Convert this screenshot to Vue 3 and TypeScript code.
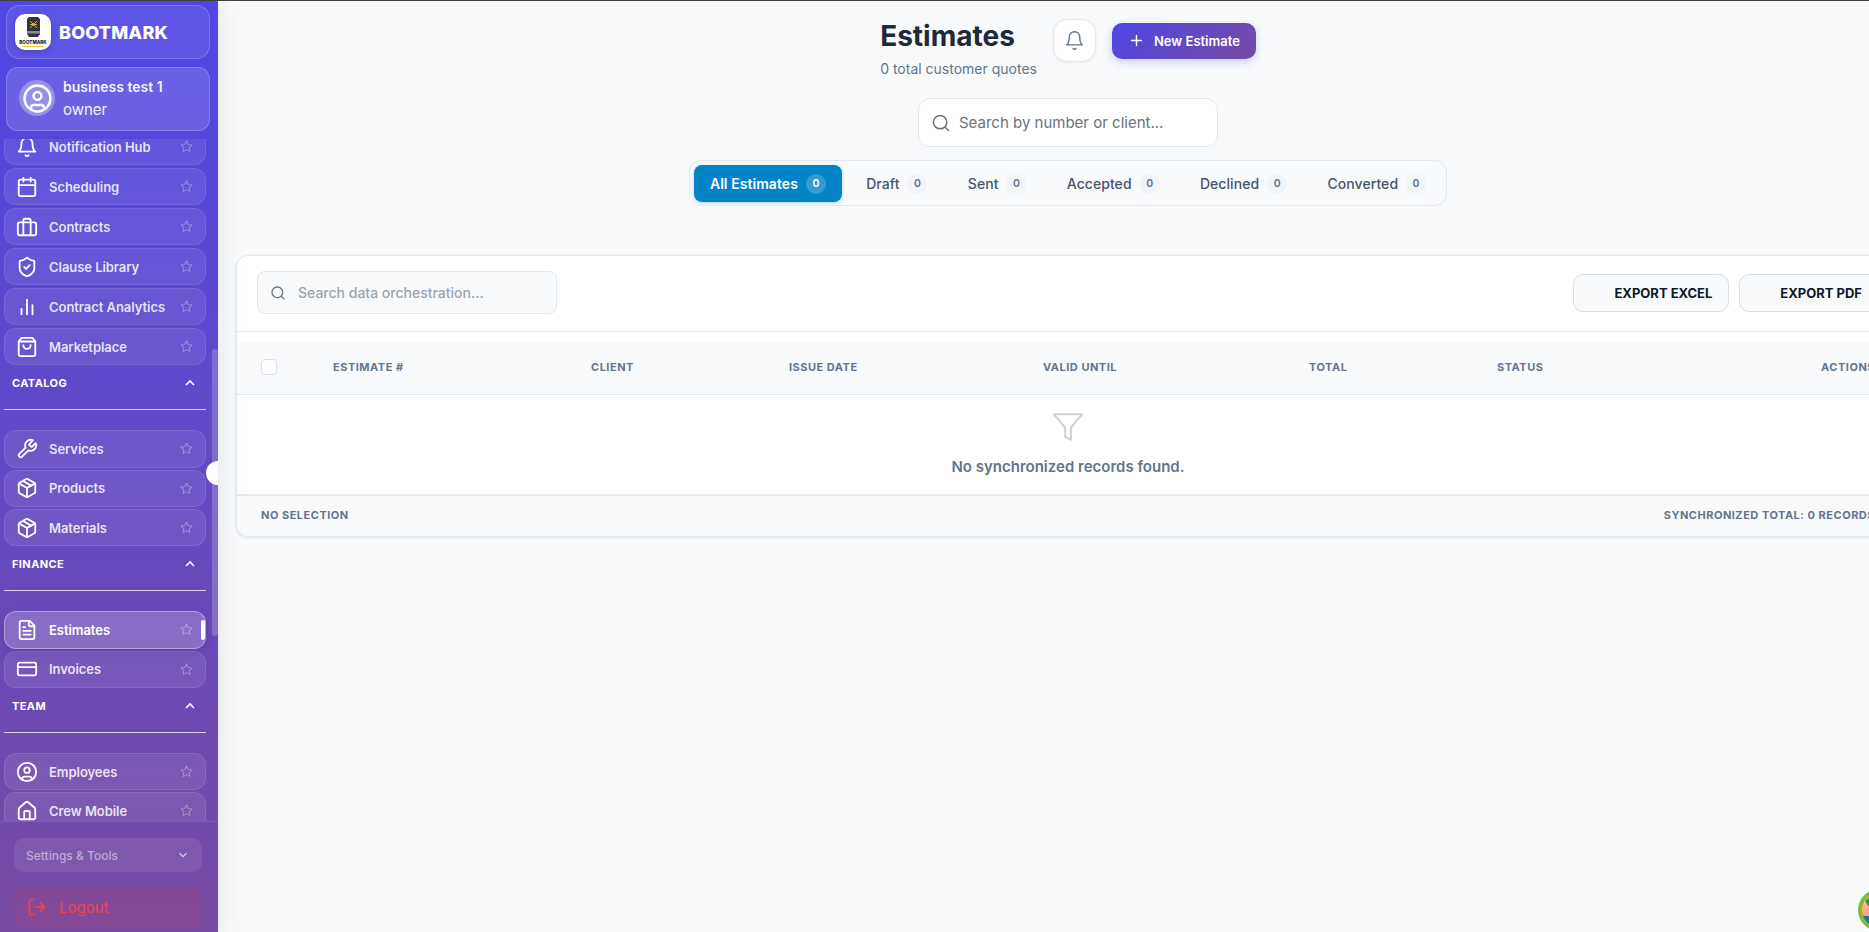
<template>
  <div class="topline"></div>
  <div class="layout">
    <!-- Sidebar -->
    <aside class="sidebar">
      <div class="brand">
        <div class="brand-logo">
          <svg viewBox="0 0 36 36" width="36" height="36">
            <path d="M12 5l2-2h9l2 2v15l-2 3h-9l-2-3z" fill="#34343a" />
            <path d="M15 7l7 7M22 7l-7 7M15 10.5h7" stroke="#e9c21f" stroke-width="0.9" />
            <circle cx="18.5" cy="10.5" r="1.3" fill="#e9c21f" />
            <path d="M12 17h13v2.5H12z" fill="#8a8a8f" />
            <text x="18" y="30" text-anchor="middle" class="brand-logo-text">BOOTMARK</text>
            <path d="M7 32.5h22" stroke="#f2c81e" stroke-width="0.9" />
          </svg>
        </div>
        <span class="brand-name">BOOTMARK</span>
      </div>

      <div class="user-card">
        <div class="avatar">
          <svg viewBox="0 0 24 24" class="avatar-icon">
            <path v-for="d in icons.user" :key="d" :d="d" />
          </svg>
        </div>
        <div class="user-text">
          <div class="user-name">business test 1</div>
          <div class="user-role">owner</div>
        </div>
      </div>

      <div class="menu-wrap">
        <nav class="menu">
          <div v-for="group in groups" :key="group.title" class="group">
            <div v-if="group.title" class="group-head">
              <div class="group-label">
                <span>{{ group.title }}</span>
                <svg viewBox="0 0 24 24" class="chev">
                  <path d="m18 15-6-6-6 6" />
                </svg>
              </div>
            </div>
            <div class="items" :class="{ wide: !group.title }">
              <a
                v-for="item in group.items"
                :key="item.label"
                class="item"
                :class="{ active: item.active }"
              >
                <svg viewBox="0 0 24 24" class="item-icon">
                  <path v-for="d in icons[item.icon]" :key="d" :d="d" />
                </svg>
                <span class="item-label">{{ item.label }}</span>
                <svg viewBox="0 0 24 24" class="star">
                  <path d="M12 2l3.09 6.26L22 9.27l-5 4.87 1.18 6.88L12 17.77l-6.18 3.25L7 14.14 2 9.27l6.91-1.01z" />
                </svg>
                <span v-if="item.active" class="active-bar"></span>
              </a>
            </div>
          </div>
        </nav>
        <div class="scroll-thumb"></div>
        <div class="collapse-dot"></div>
      </div>

      <div class="side-bottom">
        <div class="settings">
          <span>Settings &amp; Tools</span>
          <svg viewBox="0 0 24 24" class="settings-chev"><path d="m6 9 6 6 6-6" /></svg>
        </div>
        <div class="logout">
          <svg viewBox="0 0 24 24" class="logout-icon">
            <path d="M9 21H5a2 2 0 0 1-2-2V5a2 2 0 0 1 2-2h4" />
            <path d="m16 17 5-5-5-5" />
            <path d="M21 12H9" />
          </svg>
          <span>Logout</span>
        </div>
      </div>
    </aside>

    <!-- Main -->
    <main class="main">
      <div class="page">
        <header class="page-head">
          <div class="title-block">
            <h1>Estimates</h1>
            <p>0 total customer quotes</p>
          </div>
          <div class="head-actions">
            <button class="bell-btn">
              <svg viewBox="0 0 24 24" class="bell-icon">
                <path v-for="d in icons.bell" :key="d" :d="d" />
              </svg>
            </button>
            <button class="new-btn">
              <svg viewBox="0 0 24 24" class="plus-icon"><path d="M5 12h14M12 5v14" /></svg>
              New Estimate
            </button>
          </div>
        </header>

        <div class="search">
          <svg viewBox="0 0 24 24" class="search-icon">
            <path d="M19 11a8 8 0 1 1-16 0a8 8 0 1 1 16 0M21 21l-4.3-4.3" />
          </svg>
          <span>Search by number or client...</span>
        </div>

        <div class="tabs">
          <div v-for="(tab, i) in tabs" :key="tab" class="tab" :class="{ current: i === 0 }">
            <span>{{ tab }}</span>
            <span class="count">0</span>
          </div>
        </div>

        <section class="card">
          <div class="toolbar">
            <div class="table-search">
              <svg viewBox="0 0 24 24" class="table-search-icon">
                <path d="M19 11a8 8 0 1 1-16 0a8 8 0 1 1 16 0M21 21l-4.3-4.3" />
              </svg>
              <span>Search data orchestration...</span>
            </div>
            <div class="exports">
              <button class="export">EXPORT EXCEL</button>
              <button class="export">EXPORT PDF</button>
            </div>
          </div>

          <div class="table-head">
            <span class="check"></span>
            <span v-for="col in columns" :key="col">{{ col }}</span>
            <span class="actions-col">ACTIONS</span>
          </div>

          <div class="empty">
            <svg viewBox="0 0 24 24" class="funnel">
              <path d="M22 3H2l8 9.46V19l4 2v-8.54z" />
            </svg>
            <p>No synchronized records found.</p>
          </div>

          <div class="table-foot">
            <span>NO SELECTION</span>
            <span>SYNCHRONIZED TOTAL: 0 RECORDS</span>
          </div>
        </section>
      </div>
    </main>

    <!-- Floating widget in the corner -->
    <div class="widget">
      <svg viewBox="0 0 42 42" width="42" height="42">
        <defs>
          <linearGradient id="sunset" x1="0" y1="0" x2="0" y2="1">
            <stop offset="0" stop-color="#ffe08a" />
            <stop offset="0.65" stop-color="#ff9a7a" />
            <stop offset="0.66" stop-color="#12799a" />
            <stop offset="1" stop-color="#12799a" />
          </linearGradient>
        </defs>
        <circle cx="21" cy="21" r="19" fill="url(#sunset)" stroke="#86b83c" stroke-width="4" />
        <path d="M7 12l4-4 3 5-4 4z" fill="#2f9a3a" />
      </svg>
    </div>
  </div>
</template>

<script setup lang="ts">
interface NavItem {
  label: string
  icon: string
  active?: boolean
}

interface NavGroup {
  title: string
  items: NavItem[]
}

const icons: Record<string, string[]> = {
  bell: ['M6 8a6 6 0 0 1 12 0c0 7 3 9 3 9H3s3-2 3-9', 'M10.3 21a1.94 1.94 0 0 0 3.4 0'],
  calendar: ['M8 2v4', 'M16 2v4', 'M5 4h14a2 2 0 0 1 2 2v14a2 2 0 0 1-2 2H5a2 2 0 0 1-2-2V6a2 2 0 0 1 2-2z', 'M3 10h18'],
  briefcase: ['M4 7h16a2 2 0 0 1 2 2v10a2 2 0 0 1-2 2H4a2 2 0 0 1-2-2V9a2 2 0 0 1 2-2z', 'M16 21V5a2 2 0 0 0-2-2h-4a2 2 0 0 0-2 2v16'],
  shield: [
    'M20 13c0 5-3.5 7.5-7.66 8.95a1 1 0 0 1-.67-.01C7.5 20.5 4 18 4 13V6a1 1 0 0 1 1-1c2 0 4.5-1.2 6.24-2.72a1.17 1.17 0 0 1 1.52 0C14.51 3.81 17 5 19 5a1 1 0 0 1 1 1z',
    'm9 12 2 2 4-4',
  ],
  chart: ['M18 20V10', 'M12 20V4', 'M6 20v-6'],
  bag: ['M6 2 3 6v14a2 2 0 0 0 2 2h14a2 2 0 0 0 2-2V6l-3-4Z', 'M3 6h18', 'M16 10a4 4 0 0 1-8 0'],
  wrench: ['M14.7 6.3a1 1 0 0 0 0 1.4l1.6 1.6a1 1 0 0 0 1.4 0l3.77-3.77a6 6 0 0 1-7.94 7.94l-6.91 6.91a2.12 2.12 0 0 1-3-3l6.91-6.91a6 6 0 0 1 7.94-7.94l-3.76 3.76z'],
  box: [
    'M16.5 9.4 7.55 4.24',
    'M21 16V8a2 2 0 0 0-1-1.73l-7-4a2 2 0 0 0-2 0l-7 4A2 2 0 0 0 3 8v8a2 2 0 0 0 1 1.73l7 4a2 2 0 0 0 2 0l7-4A2 2 0 0 0 21 16z',
    'M3.29 7 12 12l8.71-5',
    'M12 22V12',
  ],
  file: ['M15 2H6a2 2 0 0 0-2 2v16a2 2 0 0 0 2 2h12a2 2 0 0 0 2-2V7Z', 'M14 2v4a2 2 0 0 0 2 2h4', 'M10 9H8', 'M16 13H8', 'M16 17H8'],
  card: ['M4 5h16a2 2 0 0 1 2 2v10a2 2 0 0 1-2 2H4a2 2 0 0 1-2-2V7a2 2 0 0 1 2-2z', 'M2 10h20'],
  user: ['M22 12a10 10 0 1 1-20 0a10 10 0 1 1 20 0', 'M15 10a3 3 0 1 1-6 0a3 3 0 1 1 6 0', 'M7 20.662V19a2 2 0 0 1 2-2h6a2 2 0 0 1 2 2v1.662'],
  home: [
    'M15 21v-8a1 1 0 0 0-1-1h-4a1 1 0 0 0-1 1v8',
    'M3 10a2 2 0 0 1 .709-1.528l7-5.999a2 2 0 0 1 2.582 0l7 5.999A2 2 0 0 1 21 10v9a2 2 0 0 1-2 2H5a2 2 0 0 1-2-2z',
  ],
}

const groups: NavGroup[] = [
  {
    title: '',
    items: [
      { label: 'Notification Hub', icon: 'bell' },
      { label: 'Scheduling', icon: 'calendar' },
      { label: 'Contracts', icon: 'briefcase' },
      { label: 'Clause Library', icon: 'shield' },
      { label: 'Contract Analytics', icon: 'chart' },
      { label: 'Marketplace', icon: 'bag' },
    ],
  },
  {
    title: 'CATALOG',
    items: [
      { label: 'Services', icon: 'wrench' },
      { label: 'Products', icon: 'box' },
      { label: 'Materials', icon: 'box' },
    ],
  },
  {
    title: 'FINANCE',
    items: [
      { label: 'Estimates', icon: 'file', active: true },
      { label: 'Invoices', icon: 'card' },
    ],
  },
  {
    title: 'TEAM',
    items: [
      { label: 'Employees', icon: 'user' },
      { label: 'Crew Mobile', icon: 'home' },
    ],
  },
]

const tabs = ['All Estimates', 'Draft', 'Sent', 'Accepted', 'Declined', 'Converted']
const columns = ['ESTIMATE #', 'CLIENT', 'ISSUE DATE', 'VALID UNTIL', 'TOTAL', 'STATUS']
</script>

<style>
html,
body {
  margin: 0;
  height: 100%;
  overflow: hidden;
  background: #f8fafc;
}
</style>

<style scoped>
* {
  box-sizing: border-box;
}

.topline {
  height: 1px;
  background: #403f3a;
}

.layout {
  position: relative;
  display: flex;
  height: 931px;
  overflow: hidden;
  font-family: Inter, 'Liberation Sans', sans-serif;
}

/* === Sidebar === */
.sidebar {
  position: relative;
  z-index: 2;
  flex: 0 0 218px;
  display: flex;
  flex-direction: column;
  background: linear-gradient(180deg, #4f46e5 0%, #764ba2 100%);
  box-shadow: 4px 0 24px rgba(0, 0, 0, 0.08);
}

.brand {
  display: flex;
  align-items: center;
  gap: 8px;
  height: 54px;
  margin: 4px 8px 8px 6px;
  padding-left: 8px;
  border: 1px solid rgba(255, 255, 255, 0.2);
  border-radius: 14px;
  background: rgba(255, 255, 255, 0.08);
}

.brand-logo {
  width: 36px;
  height: 36px;
  border-radius: 10px;
  background: #fff;
  box-shadow: 0 2px 6px rgba(0, 0, 0, 0.15);
  overflow: hidden;
}

.brand-logo-text {
  font-size: 4.6px;
  font-weight: 800;
  fill: #222;
}

.brand-name {
  color: #fff;
  font-size: 18px;
  font-weight: 800;
  letter-spacing: 0.2px;
}

.user-card {
  display: flex;
  align-items: center;
  gap: 8px;
  height: 64px;
  margin: 0 8px 8px 6px;
  padding: 0 0 2px 12px;
  border: 1px solid rgba(255, 255, 255, 0.2);
  border-radius: 12px;
  background: rgba(255, 255, 255, 0.14);
}

.avatar {
  display: flex;
  align-items: center;
  justify-content: center;
  width: 36px;
  height: 36px;
  border-radius: 50%;
  background: rgba(255, 255, 255, 0.3);
}

.avatar-icon {
  width: 31px;
  height: 31px;
  fill: none;
  stroke: #fff;
  stroke-width: 2;
}

.user-name {
  color: rgba(255, 255, 255, 0.95);
  font-size: 14px;
  font-weight: 600;
  line-height: 23px;
}

.user-role {
  color: rgba(255, 255, 255, 0.95);
  font-size: 15px;
  line-height: 23px;
}

.menu-wrap {
  position: relative;
  flex: 1;
  min-height: 0;
  overflow: hidden;
}

.menu {
  margin-top: -11px;
  padding: 0 12px 0 4px;
}

.items {
  display: flex;
  flex-direction: column;
  gap: 2px;
}

.items.wide {
  gap: 2.67px;
}

.group-head {
  padding-top: 12px;
}

.group-label {
  display: flex;
  align-items: center;
  justify-content: space-between;
  height: 12px;
  padding: 0 8px;
  color: #fff;
  font-size: 11px;
  font-weight: 700;
  letter-spacing: 0.4px;
}

.group-head::after {
  content: '';
  display: block;
  height: 1px;
  margin: 20px 0 20px;
  background: rgba(255, 255, 255, 0.75);
}

.chev {
  width: 16px;
  height: 16px;
  fill: none;
  stroke: #fff;
  stroke-width: 2.4;
}

.item {
  position: relative;
  display: flex;
  align-items: center;
  height: 37.33px;
  padding: 0 12px 0 11px;
  border: 1px solid rgba(255, 255, 255, 0.1);
  border-radius: 12px;
  background: rgba(255, 255, 255, 0.08);
}

.item.active {
  border-color: rgba(255, 255, 255, 0.35);
  background: rgba(255, 255, 255, 0.2);
  box-shadow: 0 3px 10px rgba(0, 0, 0, 0.12);
}

.item-icon {
  flex: none;
  width: 22px;
  height: 22px;
  fill: none;
  stroke: #fff;
  stroke-width: 2;
  stroke-linecap: round;
  stroke-linejoin: round;
}

.item-label {
  flex: 1;
  margin-left: 11px;
  color: rgba(255, 255, 255, 0.85);
  font-size: 13px;
  font-weight: 600;
  letter-spacing: -0.05px;
}

.item.active .item-label {
  color: #fff;
}

.star {
  flex: none;
  width: 13px;
  height: 13px;
  fill: none;
  stroke: rgba(255, 255, 255, 0.32);
  stroke-width: 2;
  stroke-linejoin: round;
}

.active-bar {
  position: absolute;
  top: 8px;
  right: 0;
  width: 4px;
  height: 20px;
  border-radius: 2px;
  background: #fff;
}

.scroll-thumb {
  position: absolute;
  top: 210px;
  right: 0;
  width: 6px;
  height: 287px;
  border-radius: 3px;
  background: rgba(255, 255, 255, 0.2);
}

/* half of the collapse handle, cut off by the sidebar edge */
.collapse-dot {
  position: absolute;
  top: 322px;
  right: 0;
  width: 12px;
  height: 24px;
  border-radius: 12px 0 0 12px;
  background: #fff;
}

.side-bottom {
  display: flex;
  flex-direction: column;
  gap: 13px;
  height: 111px;
  padding: 16px 16px 0 14px;
  border-top: 1px solid rgba(255, 255, 255, 0.1);
}

.settings {
  display: flex;
  align-items: center;
  justify-content: space-between;
  flex: none;
  height: 34px;
  padding: 0 12px;
  border-radius: 10px;
  background: rgba(255, 255, 255, 0.08);
  color: rgba(255, 255, 255, 0.5);
  font-size: 12px;
  font-weight: 500;
}

.settings-chev {
  width: 14px;
  height: 14px;
  fill: none;
  stroke: rgba(255, 255, 255, 0.7);
  stroke-width: 2;
}

.logout {
  display: flex;
  align-items: center;
  flex: none;
  gap: 12px;
  height: 44px;
  padding-left: 13px;
  border-radius: 10px;
  background: rgba(239, 68, 68, 0.12);
  color: #ef4444;
  font-size: 15px;
}

.logout-icon {
  width: 20px;
  height: 20px;
  fill: none;
  stroke: #ef4444;
  stroke-width: 2;
  stroke-linecap: round;
  stroke-linejoin: round;
}

/* === Main === */
.main {
  flex: 1;
  min-width: 0;
  overflow: hidden;
}

.page {
  display: flex;
  flex-direction: column;
  align-items: center;
  width: 1700px;
  padding: 18px 18px 0;
}

.page-head {
  display: flex;
  align-items: flex-start;
  gap: 16px;
}

.title-block h1 {
  margin: 0;
  color: #1e293b;
  font-size: 28px;
  font-weight: 700;
  line-height: 34px;
}

.title-block p {
  margin: 7px 0 0;
  color: #64748b;
  font-size: 14px;
  line-height: 18px;
}

.head-actions {
  display: flex;
  align-items: center;
  gap: 16px;
}

.bell-btn {
  display: flex;
  align-items: center;
  justify-content: center;
  width: 43px;
  height: 43px;
  padding: 0;
  border: 1px solid #e2e8f0;
  border-radius: 14px;
  background: #fff;
  box-shadow: 0 1px 3px rgba(0, 0, 0, 0.06);
}

.bell-icon {
  width: 21px;
  height: 21px;
  fill: none;
  stroke: #64748b;
  stroke-width: 1.6;
  stroke-linecap: round;
  stroke-linejoin: round;
}

.new-btn {
  display: flex;
  align-items: center;
  gap: 9px;
  height: 36px;
  padding: 0 16px;
  border: none;
  border-radius: 10px;
  background: linear-gradient(135deg, #4f46e5, #764ba2);
  box-shadow: 0 3px 8px rgba(79, 70, 229, 0.25);
  color: #fff;
  font-family: inherit;
  font-size: 13px;
  font-weight: 600;
}

.plus-icon {
  width: 17px;
  height: 17px;
  fill: none;
  stroke: #fff;
  stroke-width: 2;
  stroke-linecap: round;
}

.search {
  display: flex;
  align-items: center;
  gap: 8px;
  align-self: center;
  width: 300px;
  height: 49px;
  margin: 20px 0 13px 0;
  padding-left: 12px;
  border: 1px solid #e2e8f0;
  border-radius: 12px;
  background: #fff;
  color: #6b7280;
  font-size: 15px;
}

.search-icon {
  width: 20px;
  height: 20px;
  fill: none;
  stroke: #6b7280;
  stroke-width: 1.8;
  stroke-linecap: round;
}

.tabs {
  display: flex;
  gap: 8.3px;
  height: 46px;
  padding: 4px;
  border: 1px solid #e2e8f0;
  border-radius: 12px;
  background: #f8fafc;
}

.tab {
  display: flex;
  align-items: center;
  gap: 8px;
  height: 37px;
  padding: 0 16px;
  border-radius: 8px;
  color: #475569;
  font-size: 14px;
  font-weight: 500;
  letter-spacing: 0.06px;
}

.tab.current {
  background: #0284c7;
  box-shadow: 0 1px 3px rgba(2, 132, 199, 0.3);
  color: #fff;
  font-weight: 600;
}

.count {
  display: flex;
  align-items: center;
  justify-content: center;
  width: 20px;
  height: 20px;
  border-radius: 50%;
  background: #f1f5f9;
  color: #64748b;
  font-size: 10.5px;
  font-weight: 600;
}

.tab.current .count {
  background: rgba(255, 255, 255, 0.2);
  color: #fff;
}

.card {
  align-self: stretch;
  margin-top: 49px;
  border: 1px solid #e2e8f0;
  border-radius: 12px;
  background: #fff;
  box-shadow: 0 1px 3px rgba(0, 0, 0, 0.1);
  overflow: hidden;
}

.toolbar {
  display: flex;
  align-items: center;
  justify-content: space-between;
  height: 76px;
  padding: 0 20px 2px;
  border-bottom: 1px solid #e2e8f0;
}

.table-search {
  display: flex;
  align-items: center;
  gap: 12px;
  width: 300px;
  height: 43px;
  padding-left: 12px;
  border: 1px solid #e2e8f0;
  border-radius: 8px;
  background: #f8fafc;
  color: #9ca3af;
  font-size: 14px;
  font-weight: 500;
}

.table-search-icon {
  width: 16px;
  height: 16px;
  fill: none;
  stroke: #64748b;
  stroke-width: 2;
  stroke-linecap: round;
}

.exports {
  display: flex;
  gap: 10px;
}

.export {
  height: 38px;
  padding: 0 16px 0 40px;
  border: 1px solid #d8dee8;
  border-radius: 10px;
  background: #f8fafc;
  color: #0f172a;
  font-family: inherit;
  font-size: 13px;
  font-weight: 700;
}

.table-head {
  display: grid;
  grid-template-columns: 72px 258px 198px 254px 266px 188px 1fr auto;
  align-items: center;
  height: 53px;
  margin-top: 10px;
  padding: 0 24px 2px;
  border-bottom: 1px solid #e2e8f0;
  background: #f8fafc;
  color: #64748b;
  font-size: 11px;
  font-weight: 700;
  letter-spacing: 0.5px;
}

.check {
  width: 16px;
  height: 16px;
  border: 1px solid #d8dee8;
  border-radius: 4px;
  background: #fff;
}

.actions-col {
  text-align: right;
}

.empty {
  display: flex;
  flex-direction: column;
  align-items: center;
  height: 99px;
  padding-top: 15px;
}

.funnel {
  width: 34px;
  height: 34px;
  fill: none;
  stroke: #cfd2d6;
  stroke-width: 1.5;
  stroke-linejoin: round;
}

.empty p {
  margin: 13px 0 0;
  color: #64748b;
  font-size: 15px;
  font-weight: 600;
  line-height: 20px;
}

.table-foot {
  display: flex;
  align-items: center;
  justify-content: space-between;
  height: 42px;
  padding: 0 24px 2px;
  border-top: 2px solid #e2e8f0;
  background: #f8fafc;
  color: #64748b;
  font-size: 11px;
  font-weight: 700;
  letter-spacing: 0.5px;
}

.widget {
  position: absolute;
  right: -31px;
  bottom: 1px;
  width: 42px;
  height: 42px;
}
</style>
